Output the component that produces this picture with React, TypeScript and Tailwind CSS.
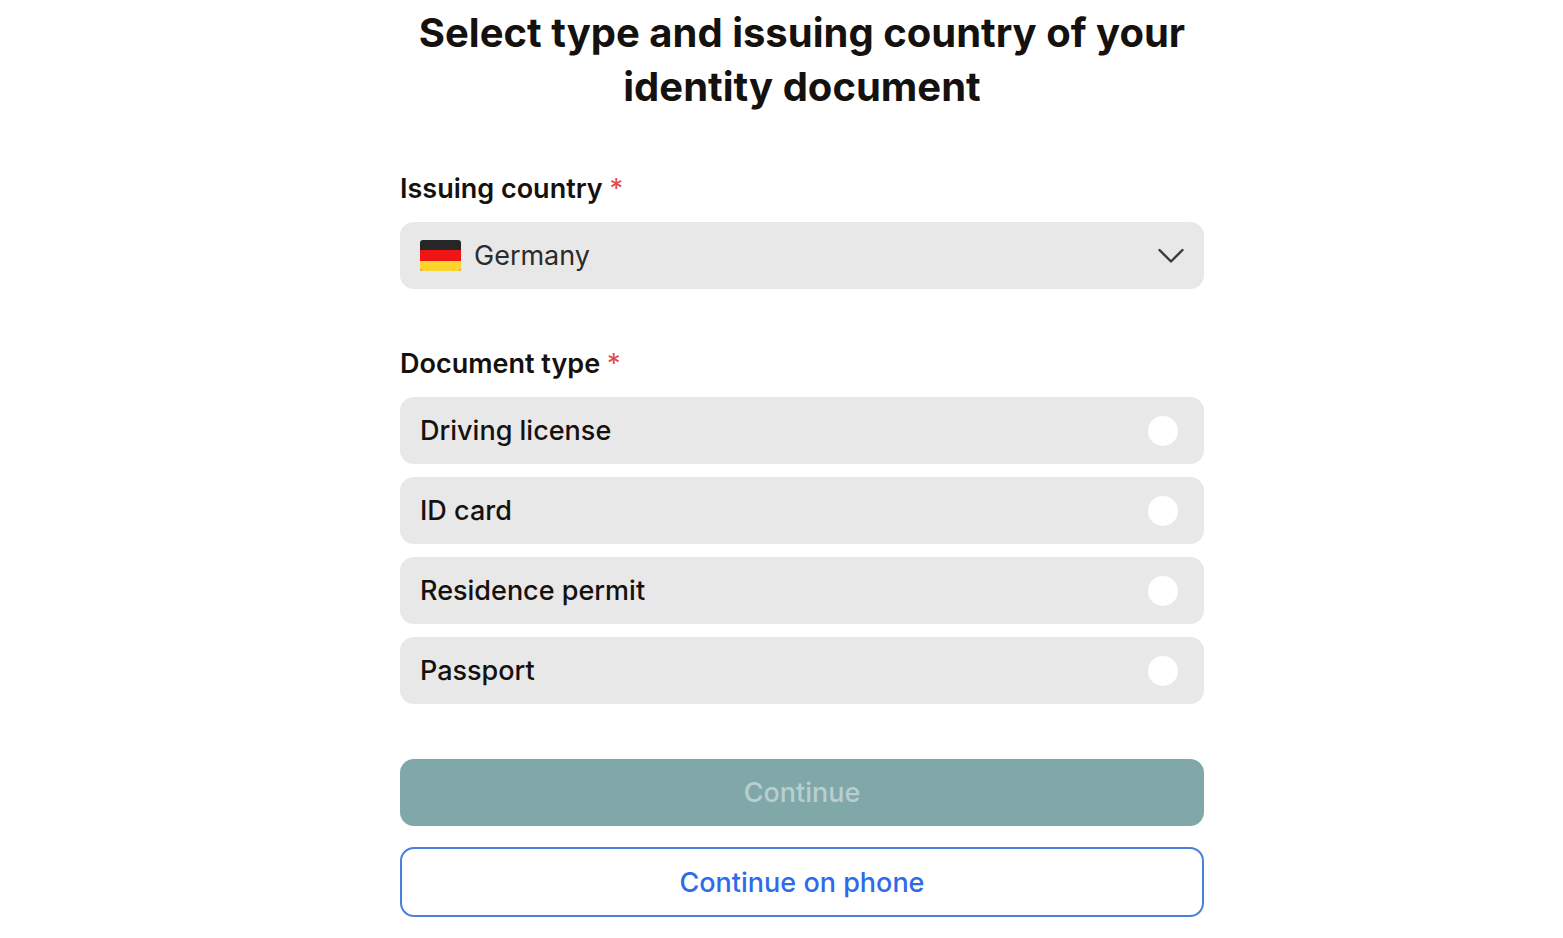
import { useState } from "react";

const COUNTRIES = ["Germany"];

const DOCUMENT_TYPES = [
  { id: "driving-license", label: "Driving license" },
  { id: "id-card", label: "ID card" },
  { id: "residence-permit", label: "Residence permit" },
  { id: "passport", label: "Passport" },
];

function GermanFlag() {
  return (
    <svg viewBox="0 0 41 31" className="h-[31px] w-[41px] rounded-[3px]" aria-hidden="true">
      <rect width="41" height="31" fill="#262626" />
      <rect y="10" width="41" height="21" fill="#f01515" />
      <rect y="21" width="41" height="10" fill="#fbd52d" />
    </svg>
  );
}

export default function App() {
  const [country, setCountry] = useState("Germany");
  const [documentType, setDocumentType] = useState("");

  return (
    <main className="min-h-screen bg-white pt-1.5 pb-5 pl-[41px] font-['Inter',sans-serif] text-[#15110e]">
      <form className="mx-auto w-full max-w-[804px]" onSubmit={(e) => e.preventDefault()}>
        <h1 className="text-center text-[40px] leading-[54px] font-bold">
          Select type and issuing country of your identity document
        </h1>

        <label htmlFor="country" className="mt-[54px] block text-[27px] leading-[42px] font-semibold">
          Issuing country <span className="font-normal text-[#e5484d]">*</span>
        </label>
        <div className="mt-3 grid items-center rounded-[14px] bg-[#e8e8e8]">
          <select
            id="country"
            value={country}
            onChange={(e) => setCountry(e.target.value)}
            className="col-start-1 row-start-1 h-[67px] w-full appearance-none rounded-[14px] bg-transparent pt-0.5 pl-[74px] text-[27px] text-[#2b2b2b]"
          >
            {COUNTRIES.map((name) => (
              <option key={name}>{name}</option>
            ))}
          </select>
          <div className="pointer-events-none col-start-1 row-start-1 flex items-center justify-between px-5">
            <GermanFlag />
            <svg viewBox="0 0 26 16" className="h-4 w-[26px]" fill="none" stroke="#3a3a3a" strokeWidth="2.4" aria-hidden="true">
              <path d="M1.5 2 13 13.5 24.5 2" strokeLinecap="round" strokeLinejoin="round" />
            </svg>
          </div>
        </div>

        <fieldset className="mt-[54px]">
          <legend className="text-[27px] leading-[42px] font-semibold">
            Document type <span className="font-normal text-[#e5484d]">*</span>
          </legend>
          <div className="mt-3 flex flex-col gap-[13px]">
            {DOCUMENT_TYPES.map(({ id, label }) => (
              <label
                key={id}
                htmlFor={id}
                className="flex h-[67px] cursor-pointer items-center justify-between rounded-[14px] bg-[#e8e8e8] pr-[26px] pl-5 text-[27px] font-medium"
              >
                <span className="pt-0.5">{label}</span>
                <input
                  id={id}
                  type="radio"
                  name="document-type"
                  checked={documentType === id}
                  onChange={() => setDocumentType(id)}
                  className="size-[30px] appearance-none rounded-full bg-white checked:border-8 checked:border-[#00524f]"
                />
              </label>
            ))}
          </div>
        </fieldset>

        <button
          type="submit"
          disabled={!documentType}
          className="mt-[55px] h-[67px] w-full rounded-[14px] bg-[#00524f] pt-0.5 text-[27px] font-medium text-white disabled:bg-[#80a8a9] disabled:text-[#b8cfd0]"
        >
          Continue
        </button>
        <button
          type="button"
          className="mt-[21px] h-[70px] w-full rounded-[14px] border-2 border-[#4a80dc] pt-0.5 text-[27px] font-medium text-[#2f6be8]"
        >
          Continue on phone
        </button>
      </form>
    </main>
  );
}
